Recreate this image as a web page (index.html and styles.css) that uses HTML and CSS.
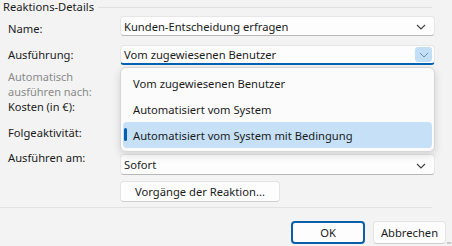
FILE: index.html
```html
<!DOCTYPE html>
<html lang="de">
<head>
<meta charset="utf-8">
<link rel="stylesheet" href="styles.css">
</head>
<body>
<div class="dialog">
  <div class="legend"><span class="legend-text">Reaktions-Details</span><span class="rule"></span></div>
  <div class="form">
    <div class="labels">
      <div class="lbl l-name">Name:</div>
      <div class="lbl l-ausf">Ausführung:</div>
      <div class="lbl l-auto disabled">Automatisch<br>ausführen nach:</div>
      <div class="lbl l-kosten">Kosten (in €):</div>
      <div class="lbl l-folge">Folgeaktivität:</div>
      <div class="lbl l-am">Ausführen am:</div>
    </div>
    <div class="controls">
      <div class="combo c-name"><span>Kunden-Entscheidung erfragen</span>
        <svg class="chev" width="10" height="6" viewBox="0 0 10 6"><polyline points="1,1 5,5 9,1" fill="none" stroke="#404040" stroke-width="1.1"/></svg>
      </div>
      <div class="combo c-ausf focused"><span>Vom zugewiesenen Benutzer</span>
        <span class="chevbtn"><svg width="10" height="6" viewBox="0 0 10 6"><polyline points="1,1 5,5 9,1" fill="none" stroke="#6a8fb0" stroke-width="1"/></svg></span>
      </div>
      <div class="spacer"></div>
      <div class="combo c-am"><span>Sofort</span>
        <svg class="chev" width="10" height="6" viewBox="0 0 10 6"><polyline points="1,1 5,5 9,1" fill="none" stroke="#404040" stroke-width="1.1"/></svg>
      </div>
      <div class="btn b-vorg">Vorgänge der Reaktion...</div>
    </div>
  </div>
  <div class="sep"></div>
  <div class="footer">
    <div class="btn b-ok">OK</div>
    <div class="btn b-cancel">Abbrechen</div>
  </div>
  <div class="grip"></div>
  <div class="popup">
    <div class="item">Vom zugewiesenen Benutzer</div>
    <div class="item">Automatisiert vom System</div>
    <div class="item selected"><span class="ind"></span>Automatisiert vom System mit Bedingung</div>
  </div>
</div>
</body>
</html>
```
FILE: styles.css
```css
* { box-sizing: border-box; }
html, body { margin: 0; padding: 0; }
body {
  background: #f3f3f3;
  font-family: "Noto Sans", "Open Sans", sans-serif;
  font-size: 11.2px;
  color: #1b1b1b;
  width: 452px;
  height: 246px;
  overflow: hidden;
}
.dialog { position: relative; width: 452px; height: 246px; }
.legend {
  display: flex;
  align-items: center;
  padding: 0 0 0 3px;
  height: 14px;
  line-height: 14px;
  width: 432px;
}
.legend-text { white-space: nowrap; }
.rule { flex: 1; height: 1px; background: #e0e0e0; margin-left: 4px; margin-top: 1px; }
.form { display: flex; }
.labels { width: 120px; padding-left: 8px; line-height: 14px; }
.lbl { white-space: nowrap; }
.l-name { margin-top: 8px; }
.l-ausf { margin-top: 12px; }
.l-auto { margin-top: 7px; line-height: 15px; font-size: 11px; }
.l-kosten { margin-top: 0; line-height: 15px; font-size: 11px; }
.l-folge { margin-top: 12px; }
.l-am { margin-top: 11px; }
.disabled { color: #8a8a8a; }
.controls { width: 315px; display: flex; flex-direction: column; }
.combo {
  position: relative;
  display: flex;
  align-items: center;
  height: 20px;
  padding-left: 3px;
  background: #fdfdfd;
  border: 1px solid #e6e6e6;
  border-bottom-color: #b8b8b8;
  border-radius: 4px;
}
.c-name { margin-top: 2px; }
.c-ausf { margin-top: 9px; }
.focused { border-bottom: 2px solid #0062b5; }
.chev { position: absolute; right: 8px; top: 7px; }
.chevbtn {
  position: absolute; right: 2px; top: 1px;
  width: 17px; height: 15px;
  background: #c3dff5; border-radius: 3px;
  display: flex; align-items: center; justify-content: center;
}
.spacer { height: 89px; }
.c-am { height: 21px; }
.c-am .chev { top: 8px; }
.btn {
  display: flex; align-items: center; justify-content: center;
  background: #fdfdfd;
  border: 1px solid #e3e3e3;
  border-bottom-color: #cfcfcf;
  border-radius: 4px;
}
.b-vorg { margin-top: 6px; width: 160px; height: 21px; }
.sep { height: 1px; background: #e2e2e2; width: 432px; margin-top: 5px; }
.footer { display: flex; justify-content: flex-end; gap: 8px; padding: 13px 6px 0 0; }
.b-ok { width: 74px; height: 23px; border: 2px solid #0a5fa8; }
.b-cancel { width: 73px; height: 23px; }
.grip {
  position: absolute; right: 1px; bottom: 2px; width: 4px; height: 2px;
  background: radial-gradient(circle, #9a9a9a 0.6px, transparent 0.8px) 0 0 / 2px 2px;
}
.popup {
  position: absolute;
  left: 120px; top: 67px;
  width: 315px; height: 85px;
  background: #fbfbfb;
  border: 1px solid #d6d6d6;
  border-radius: 6px;
  box-shadow: 0 3px 8px rgba(0,0,0,0.14);
  padding: 2px 2px;
  display: flex; flex-direction: column;
}
.item {
  position: relative;
  height: 26px;
  flex: none;
  display: flex; align-items: center;
  padding-left: 10px;
  white-space: nowrap;
}
.selected { background: #c6e1f7; border-radius: 4px; }
.ind {
  position: absolute; left: 1px; top: 6px;
  width: 3px; height: 13px; background: #0060b6; border-radius: 2px;
}
```
